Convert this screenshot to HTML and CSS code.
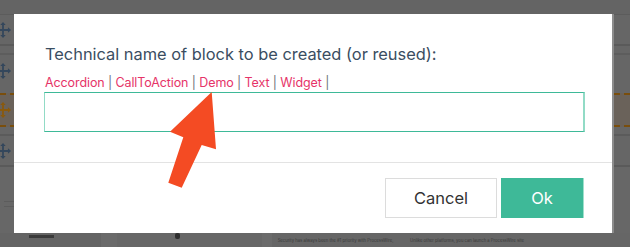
FILE: index.html
```html
<!DOCTYPE html>
<html lang="en">
<head>
<meta charset="utf-8">
<title>Block name dialog</title>
<link rel="stylesheet" href="styles.css">
</head>
<body>
<div class="page">
  <div class="bar"></div>
  <div class="row row-a"><svg class="move" viewBox="0 0 20 20"><path d="M10 1 L13 4.5 H11 V9 H15.5 V7 L19 10 L15.5 13 V11 H11 V15.5 H13 L10 19 L7 15.5 H9 V11 H4.5 V13 L1 10 L4.5 7 V9 H9 V4.5 H7 Z"/></svg></div>
  <div class="row row-gap"></div>
  <div class="row row-b"><svg class="move" viewBox="0 0 20 20"><path d="M10 1 L13 4.5 H11 V9 H15.5 V7 L19 10 L15.5 13 V11 H11 V15.5 H13 L10 19 L7 15.5 H9 V11 H4.5 V13 L1 10 L4.5 7 V9 H9 V4.5 H7 Z"/></svg></div>
  <div class="row row-sel"><svg class="move move-sel" viewBox="0 0 20 20"><path d="M10 1 L13 4.5 H11 V9 H15.5 V7 L19 10 L15.5 13 V11 H11 V15.5 H13 L10 19 L7 15.5 H9 V11 H4.5 V13 L1 10 L4.5 7 V9 H9 V4.5 H7 Z"/></svg></div>
  <div class="row row-gap2"></div>
  <div class="row row-c"><svg class="move" viewBox="0 0 20 20"><path d="M10 1 L13 4.5 H11 V9 H15.5 V7 L19 10 L15.5 13 V11 H11 V15.5 H13 L10 19 L7 15.5 H9 V11 H4.5 V13 L1 10 L4.5 7 V9 H9 V4.5 H7 Z"/></svg></div>
  <div class="lower">
    <div class="lines"><span></span><span></span></div>
  </div>
  <div class="footer-strip">
    <div class="band b1"><span class="dash"></span></div>
    <div class="band b2"></div>
    <div class="band b3"><span class="figure"></span></div>
    <div class="band b4"></div>
    <div class="band b5">
      <p class="copy c1">Security has always been the #1 priority with ProcessWire,</p>
      <p class="copy c2">Unlike other platforms, you can launch a ProcessWire site</p>
    </div>
  </div>
</div>

<div class="overlay">
  <div class="dialog">
    <div class="dialog-body">
      <label class="title" for="blockname">Technical name of block to be created (or reused):</label>
      <div class="choices">
        <a href="#">Accordion</a> <span class="sep">|</span> <a href="#">CallToAction</a> <span class="sep">|</span> <a href="#">Demo</a> <span class="sep">|</span> <a href="#">Text</a> <span class="sep">|</span> <a href="#">Widget</a> <span class="sep">|</span>
      </div>
      <input id="blockname" class="field" type="text">
    </div>
    <div class="dialog-footer">
      <button class="btn btn-cancel" type="button">Cancel</button>
      <button class="btn btn-ok" type="button">Ok</button>
    </div>
  </div>
</div>

<svg class="arrow" width="630" height="247" viewBox="0 0 630 247">
  <polygon points="211.7,92 170,131.7 183.3,137.3 168.3,182.7 181.7,187.7 201.7,145 216,149.3" fill="#f44b23"/>
</svg>
</body>
</html>
```

FILE: styles.css
```css
* { box-sizing: border-box; }
html, body { margin: 0; padding: 0; }
body {
  width: 630px;
  height: 247px;
  overflow: hidden;
  background: #666;
  font-family: Inter, "Liberation Sans", sans-serif;
}

/* dimmed page behind the modal */
.page {
  display: flex;
  flex-direction: column;
  width: 630px;
  height: 247px;
  overflow: hidden;
}
.bar { height: 15px; background: #646464; border-bottom: 1px solid #5c5c5c; flex: none; }
.row { flex: none; display: flex; align-items: center; overflow: hidden; }
.row-a { height: 31px; border-bottom: 2px solid #5a5a5a; }
.row-gap { height: 9px; border-bottom: 2px solid #5d5d5d; }
.row-b { height: 38px; align-items: flex-start; padding-top: 7px; }
.row-sel {
  height: 34px;
  background: #6a625a;
  border-top: 2px dashed #7a4e0c;
  border-bottom: 2px dashed #7a4e0c;
}
.row-gap2 { height: 9px; border-bottom: 2px solid #5b5b5b; }
.row-c { height: 31px; border-bottom: 2px solid #5a5a5a; }
.move { width: 18px; height: 18px; margin-left: -6px; fill: #34475c; flex: none; }
.move-sel { fill: #8a5a0e; }
.lower { flex: none; height: 66px; background: #676767; padding-top: 34px; }
.lines { display: flex; flex-direction: column; gap: 4px; padding-left: 4px; width: 14px; }
.lines span { display: block; height: 1px; background: #5c5c5c; }

.footer-strip { flex: 1; display: flex; }
.band { height: 100%; }
.b1 { width: 101px; background: #646464; padding: 2px 0 0 29px; }
.dash { display: block; width: 25px; height: 3px; background: #3a3a3a; }
.b2 { width: 16px; background: #6a6a6a; }
.b3 { width: 145px; background: #676767; }
.figure { display: block; margin: 0 0 0 58px; width: 5px; height: 6px; background: #2e2e2e; border-radius: 2px; }
.b4 { width: 10px; background: #6b6b6b; }
.b5 { flex: 1; background: #666; display: flex; gap: 12px; padding: 4px 0 0 3px; }
.copy {
  margin: 0;
  flex: none;
  font-size: 4.2px;
  line-height: 8px;
  color: #3a3a3a;
  text-align: center;
  white-space: nowrap;
}
.c1 { width: 121px; }
.c2 { width: 118px; }

/* modal */
.overlay {
  position: fixed;
  inset: 0;
  display: flex;
  align-items: center;
  justify-content: center;
}
.dialog {
  width: 600px;
  height: 219px;
  margin-left: -2px;
  background: #fff;
  border-right: 2px solid #8c8c8c;
  display: flex;
  flex-direction: column;
}
.dialog-body {
  padding: 30px 28px 30px 30px;
  border-bottom: 1px solid #e3e3e3;
}
.title {
  display: block;
  font-size: 16.4px;
  line-height: 20px;
  color: #3a4d61;
  padding-left: 1px;
  letter-spacing: 0;
}
.choices {
  margin-top: 10px;
  font-size: 12.5px;
  line-height: 18px;
  padding-left: 1px;
  color: #6b7079;
  letter-spacing: -0.1px;
}
.choices a { color: #e63468; text-decoration: none; }
.choices .sep { color: #6e737b; }
.field {
  display: block;
  width: 541px;
  height: 40px;
  margin: 0;
  border: 1px solid #3eb998;
  border-left-color: #92dbc6;
  border-right-color: #92dbc6;
  border-right-width: 2px;
  background: #fff;
  outline: none;
  font: inherit;
}
.dialog-footer {
  flex: 1;
  display: flex;
  justify-content: flex-end;
  align-items: center;
  gap: 4px;
  padding: 0 28px 0 30px;
}
.btn {
  height: 40px;
  margin: 0;
  font-family: Inter, "Liberation Sans", sans-serif;
  font-size: 16.5px;
  cursor: pointer;
}
.btn-cancel {
  width: 112px;
  background: #fff;
  color: #333;
  border: 1px solid #dcdcdc;
}
.btn-ok {
  width: 83px;
  background: #3eb998;
  color: #fff;
  border: none;
  border-right: 1px solid #9fe0cc;
}

.arrow {
  position: fixed;
  left: 0;
  top: 0;
  pointer-events: none;
}
```
